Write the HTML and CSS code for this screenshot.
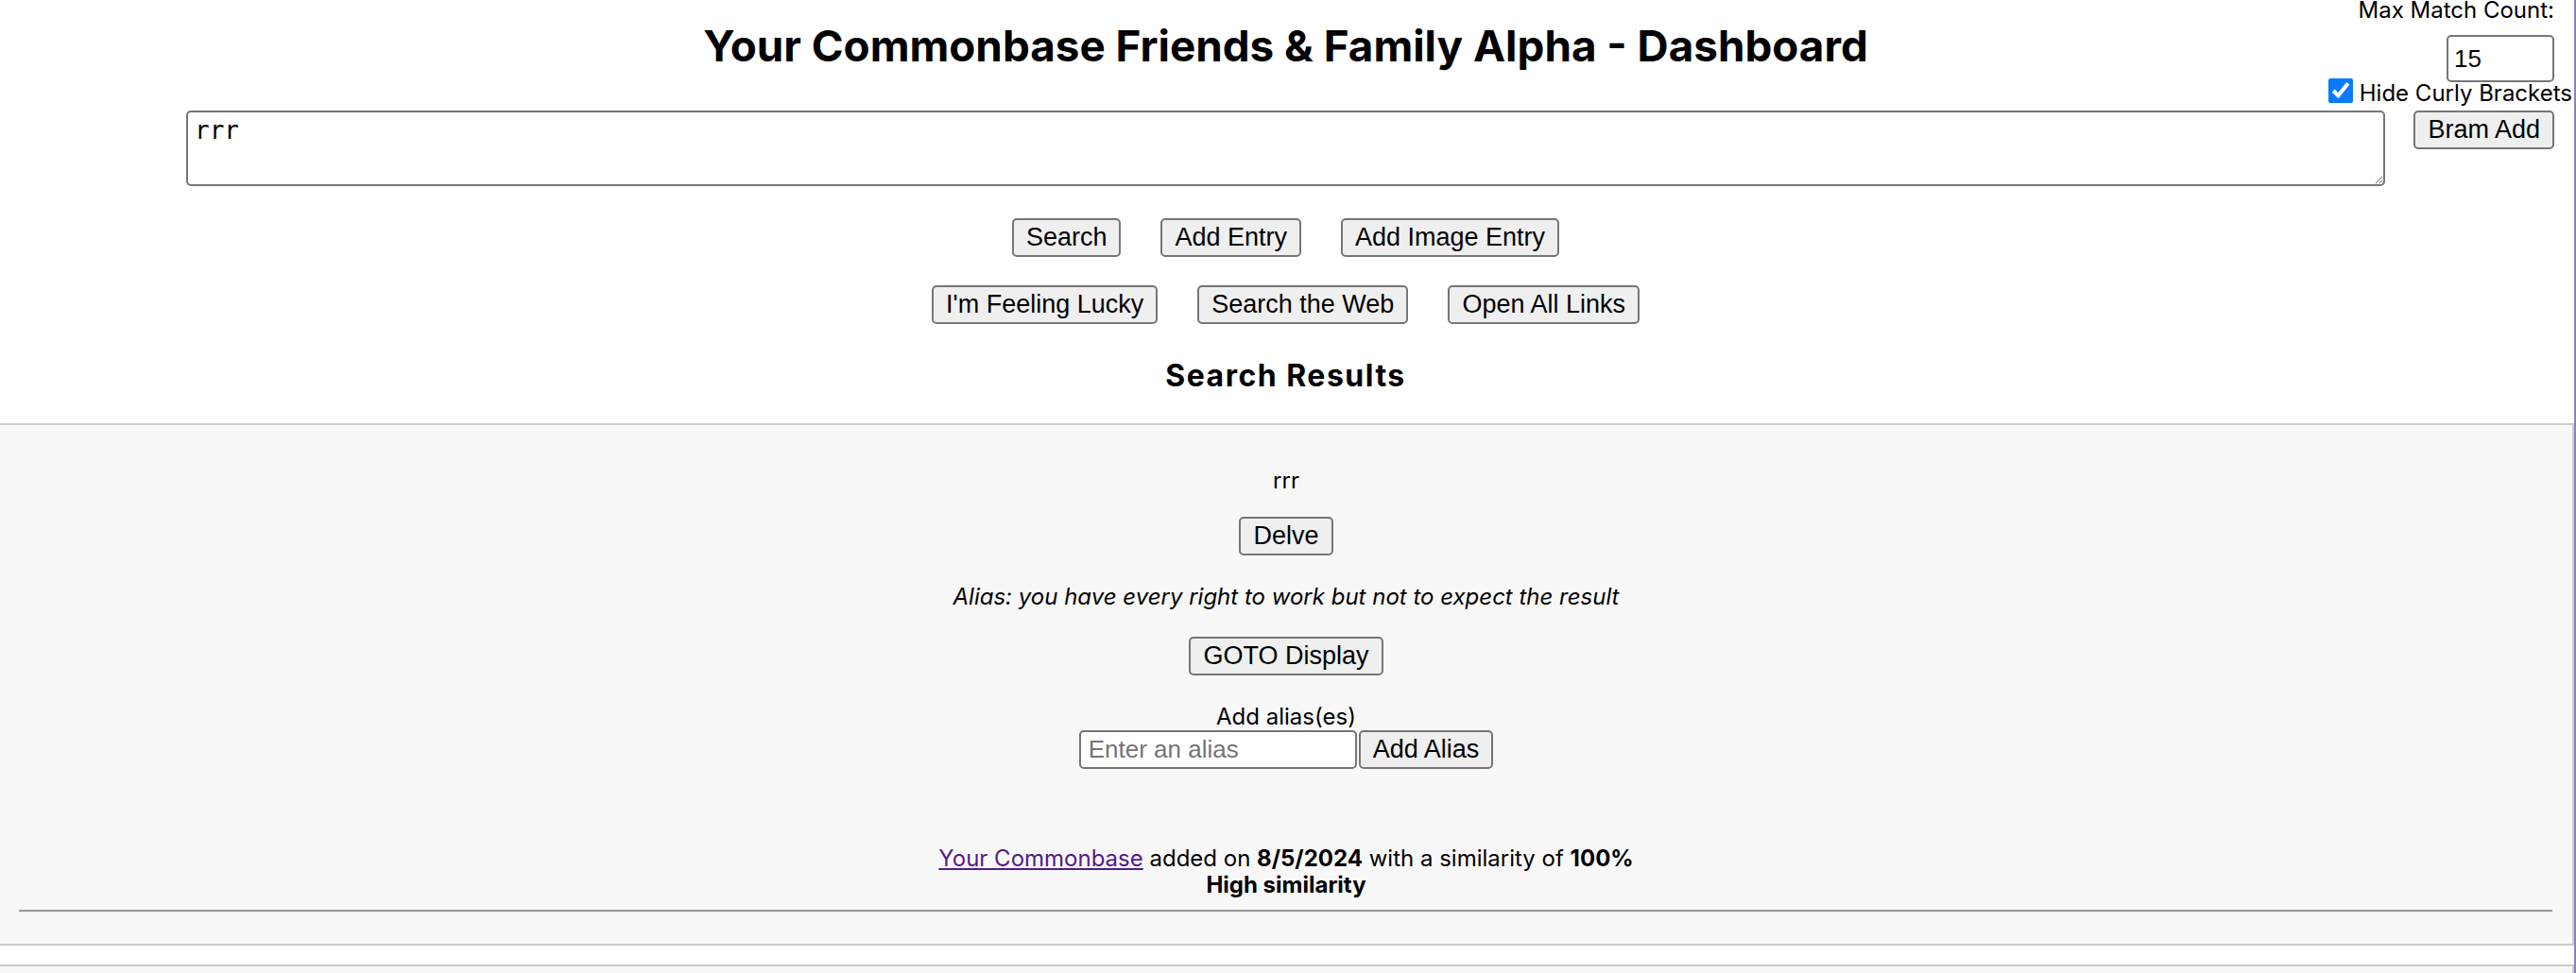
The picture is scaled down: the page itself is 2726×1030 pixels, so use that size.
FILE: index.html
```html
<!DOCTYPE html>
<html lang="en">
<head>
<meta charset="utf-8">
<title>Your Commonbase Friends &amp; Family Alpha - Dashboard</title>
<link rel="stylesheet" href="styles.css">
</head>
<body>
<div class="settings">
  <label class="settings-label" for="max-count">Max Match Count:</label>
  <input id="max-count" class="count-input" type="number" value="15">
  <label class="curly"><input type="checkbox" class="curly-box" checked><span class="curly-text">Hide Curly Brackets</span></label>
  <button class="btn bram">Bram Add</button>
</div>

<header class="top">
  <h1 class="title">Your Commonbase Friends &amp; Family Alpha - Dashboard</h1>
  <textarea class="query">rrr</textarea>
  <div class="btn-row">
    <button class="btn">Search</button>
    <button class="btn">Add Entry</button>
    <button class="btn">Add Image Entry</button>
  </div>
  <div class="btn-row row2">
    <button class="btn">I'm Feeling Lucky</button>
    <button class="btn">Search the Web</button>
    <button class="btn">Open All Links</button>
  </div>
  <h2 class="results-title">Search Results</h2>
</header>

<section class="result">
  <p class="entry-text">rrr</p>
  <button class="btn delve">Delve</button>
  <p class="alias">Alias: you have every right to work but not to expect the result</p>
  <button class="btn goto">GOTO Display</button>
  <div class="alias-add">
    <span class="alias-label">Add alias(es)</span>
    <div class="alias-form">
      <input class="alias-input" type="text" placeholder="Enter an alias"><button class="btn">Add Alias</button>
    </div>
  </div>
  <p class="meta"><a class="source" href="#">Your Commonbase</a> added on <b>8/5/2024</b> with a similarity of <b>100%</b><br><b>High similarity</b></p>
  <hr class="divider">
</section>
<section class="result next"></section>
</body>
</html>
```
FILE: styles.css
```css
html, body {
  margin: 0;
  padding: 0;
}

body {
  font-family: Inter, "Noto Sans", sans-serif;
  font-size: 24px;
  color: #000;
  background: #fff;
  border-right: 2px solid #8c82b8;
  height: 1030px;
  box-sizing: border-box;
  overflow: hidden;
}

/* buttons */
.btn {
  font: 27px "Liberation Sans", Arial, sans-serif;
  line-height: 29px;
  padding: 4px 13px;
  border: 2px solid #767676;
  border-radius: 5px;
  background: #efefef;
  color: #000;
  margin: 0;
}

/* top-right settings panel */
.settings {
  position: absolute;
  top: 1px;
  right: 23px;
  display: flex;
  flex-direction: column;
  align-items: flex-end;
}

.settings-label {
  line-height: 20px;
}

.count-input {
  margin: 16px 0 0;
  width: 114px;
  height: 50px;
  box-sizing: border-box;
  border: 2px solid #767676;
  border-radius: 5px;
  padding: 0 6px;
  font: 26px "Liberation Sans", Arial, sans-serif;
  color: #000;
  background: #fff;
}

.count-input::-webkit-inner-spin-button,
.count-input::-webkit-outer-spin-button {
  -webkit-appearance: none;
  margin: 0;
}

.curly {
  display: flex;
  align-items: flex-start;
  gap: 7px;
  margin-top: -4px;
  margin-right: -19px;
}

.curly-box {
  width: 26px;
  height: 26px;
  margin: 0;
  accent-color: #0a7aff;
}

.curly-text {
  line-height: 26px;
  padding-top: 3px;
  white-space: nowrap;
}

.settings .bram {
  margin-top: 5px;
}

/* header */
.top {
  display: flex;
  flex-direction: column;
  align-items: center;
  padding-right: 3px;
}

.title {
  margin: 21px 0 0;
  font-size: 45.8px;
  font-weight: 700;
  line-height: 56px;
}

.query {
  display: block;
  margin: 40px 0 0;
  width: 2327px;
  height: 80px;
  box-sizing: border-box;
  border: 2px solid #767676;
  border-radius: 5px;
  padding: 4px 7px;
  font: 26px "DejaVu Sans Mono", "Liberation Mono", monospace;
  color: #000;
  background: #fff;
}

.btn-row {
  display: flex;
  gap: 42px;
  margin-top: 34px;
}

.btn-row.row2 {
  margin-top: 30px;
}

.results-title {
  margin: 37px 0 0;
  font-size: 32px;
  font-weight: 700;
  line-height: 36px;
  letter-spacing: 1.5px;
}

/* result card */
.result {
  margin-top: 32px;
  background: #f8f8f8;
  border-top: 2px solid #cccccc;
  border-right: 2px solid #cccccc;
  border-bottom: 2px solid #cccccc;
  padding: 0 20px 33px;
  display: flex;
  flex-direction: column;
  align-items: center;
  line-height: 28px;
}

.entry-text {
  margin: 45px 0 0;
}

.result .delve {
  margin-top: 24px;
}

.alias {
  margin: 30px 0 0;
  font-style: italic;
}

.result .goto {
  margin-top: 28px;
}

.alias-add {
  margin-top: 30px;
  display: flex;
  flex-direction: column;
  align-items: center;
}

.alias-form {
  display: flex;
  gap: 2px;
}

.alias-input {
  width: 294px;
  height: 41px;
  box-sizing: border-box;
  margin: 0;
  border: 2px solid #767676;
  border-radius: 5px;
  padding: 0 8px;
  font: 26px "Liberation Sans", Arial, sans-serif;
  background: #fff;
}

.alias-input::placeholder {
  color: #757575;
}

.meta {
  margin: 81px 0 0;
  text-align: center;
}

.source {
  color: #551a8b;
}

.divider {
  align-self: stretch;
  margin: 12px 1px 0 0;
  border: none;
  border-top: 2px solid #9a9a9a;
  border-bottom: 1px solid #e9e9e9;
  height: 0;
}

.result.next {
  margin-top: 20px;
  border-bottom: none;
  padding: 0;
  height: 7px;
}
```
